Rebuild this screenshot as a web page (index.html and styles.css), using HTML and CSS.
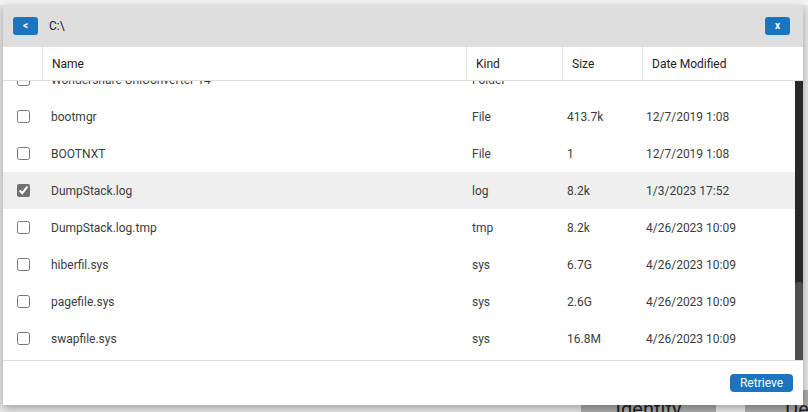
FILE: index.html
```html
<!DOCTYPE html>
<html lang="en">
<head>
<meta charset="utf-8">
<title>File picker</title>
<link rel="stylesheet" href="styles.css">
</head>
<body>
<div class="page">
  <div class="topstrip"></div>
  <div class="toolbar">
    <div class="bgbtn id-btn">Identity</div>
    <div class="bgbtn de-btn">Details</div>
  </div>
</div>

<div class="dialog">
  <div class="titlebar">
    <button class="btn small">&lt;</button>
    <span class="path">C:\</span>
    <span class="spacer"></span>
    <button class="btn small">x</button>
  </div>

  <div class="thead">
    <div class="th th-check"></div>
    <div class="th">Name</div>
    <div class="th">Kind</div>
    <div class="th">Size</div>
    <div class="th">Date Modified</div>
  </div>

  <div class="tbody">
    <div class="viewport">
      <div class="rows">
        <div class="row"><div class="c-check"><input type="checkbox"></div><div class="c-name">Wondershare UniConverter 14</div><div class="c-kind">Folder</div><div class="c-size"></div><div class="c-date"></div></div>
        <div class="row"><div class="c-check"><input type="checkbox"></div><div class="c-name">bootmgr</div><div class="c-kind">File</div><div class="c-size">413.7k</div><div class="c-date">12/7/2019 1:08</div></div>
        <div class="row"><div class="c-check"><input type="checkbox"></div><div class="c-name">BOOTNXT</div><div class="c-kind">File</div><div class="c-size">1</div><div class="c-date">12/7/2019 1:08</div></div>
        <div class="row selected"><div class="c-check"><input type="checkbox" checked></div><div class="c-name">DumpStack.log</div><div class="c-kind">log</div><div class="c-size">8.2k</div><div class="c-date">1/3/2023 17:52</div></div>
        <div class="row"><div class="c-check"><input type="checkbox"></div><div class="c-name">DumpStack.log.tmp</div><div class="c-kind">tmp</div><div class="c-size">8.2k</div><div class="c-date">4/26/2023 10:09</div></div>
        <div class="row"><div class="c-check"><input type="checkbox"></div><div class="c-name">hiberfil.sys</div><div class="c-kind">sys</div><div class="c-size">6.7G</div><div class="c-date">4/26/2023 10:09</div></div>
        <div class="row"><div class="c-check"><input type="checkbox"></div><div class="c-name">pagefile.sys</div><div class="c-kind">sys</div><div class="c-size">2.6G</div><div class="c-date">4/26/2023 10:09</div></div>
        <div class="row"><div class="c-check"><input type="checkbox"></div><div class="c-name">swapfile.sys</div><div class="c-kind">sys</div><div class="c-size">16.8M</div><div class="c-date">4/26/2023 10:09</div></div>
      </div>
    </div>
    <div class="scrollbar"><div class="thumb"></div></div>
  </div>

  <div class="footer">
    <button class="btn retrieve">Retrieve</button>
  </div>
</div>
</body>
</html>
```

FILE: styles.css
```css
html, body {
  margin: 0;
  padding: 0;
  height: 100%;
  overflow: hidden;
}

body {
  background: #e6e6e6;
  font-family: Roboto, "Liberation Sans", Arial, sans-serif;
  position: relative;
}

.page {
  width: 100%;
  overflow: hidden;
}

.topstrip {
  height: 5px;
  background: #f3f3f3;
}

.toolbar {
  display: flex;
  gap: 29px;
  padding-left: 581px;
  margin-top: 385px;
  white-space: nowrap;
  overflow: hidden;
}

.bgbtn {
  flex-shrink: 0;
  background: #a9a9a9;
  color: #1e1e1e;
  font-size: 20px;
  line-height: 24px;
  padding: 7px 0 10px;
  text-align: center;
}

.id-btn {
  width: 135px;
}

.de-btn {
  width: 110px;
  text-align: left;
  padding-left: 40px;
}

/* dialog overlays the page */
.dialog {
  position: absolute;
  top: 5px;
  left: 3px;
  width: 800px;
  height: 400px;
  background: #ffffff;
  display: flex;
  flex-direction: column;
  box-shadow: 0 3px 8px rgba(0, 0, 0, 0.3);
  z-index: 10;
}

.titlebar {
  height: 42px;
  flex-shrink: 0;
  background: #dedede;
  display: flex;
  align-items: center;
  padding: 0 13px 0 10px;
}

.btn {
  border: none;
  background: #1b74bd;
  color: #ffffff;
  font-family: Roboto, "Liberation Sans", Arial, sans-serif;
  cursor: pointer;
  padding: 0;
}

.btn.small {
  width: 25px;
  height: 18px;
  border-radius: 3px;
  font-size: 10px;
  font-weight: bold;
  line-height: 18px;
}

.path {
  margin-left: 11px;
  font-size: 12px;
  color: #222222;
}

.spacer {
  flex: 1;
}

.thead {
  height: 33px;
  flex-shrink: 0;
  display: grid;
  grid-template-columns: 39px 424px 96px 80px 1fr;
  border-bottom: 1px solid #dddddd;
}

.th {
  border-left: 1px solid #e2e2e2;
  font-size: 12px;
  color: #222222;
  display: flex;
  align-items: center;
  padding-left: 9px;
}

.th-check {
  border-left: none;
}

.tbody {
  height: 279px;
  flex-shrink: 0;
  display: flex;
  border-bottom: 1px solid #dddddd;
}

.viewport {
  flex: 1;
  overflow: hidden;
  display: flex;
  flex-direction: column;
  justify-content: flex-end;
}

.scrollbar {
  width: 8px;
  flex-shrink: 0;
  background: #282828;
  display: flex;
  flex-direction: column;
  justify-content: flex-end;
}

.thumb {
  height: 78px;
  background: #4d4d4d;
  border-radius: 3px 3px 0 0;
}

.rows {
  flex-shrink: 0;
  padding-bottom: 3px;
}

.row {
  height: 37px;
  display: grid;
  grid-template-columns: 39px 424px 96px 80px 1fr;
  align-items: center;
  font-size: 12px;
  color: #3c3c3c;
  white-space: nowrap;
}

.row.selected {
  background: #efefef;
}

.c-check {
  padding-left: 14px;
  display: flex;
  align-items: center;
}

.c-check input {
  margin: 0;
  width: 13px;
  height: 13px;
  accent-color: #717171;
}

.c-name {
  padding-left: 9px;
}

.c-kind {
  padding-left: 6px;
}

.c-size {
  padding-left: 5px;
}

.c-date {
  padding-left: 4px;
}

.footer {
  flex: 1;
  display: flex;
  align-items: center;
  justify-content: flex-end;
  padding-right: 10px;
}

.btn.retrieve {
  width: 63px;
  height: 18px;
  border-radius: 4px;
  font-size: 12px;
  line-height: 18px;
}
```
